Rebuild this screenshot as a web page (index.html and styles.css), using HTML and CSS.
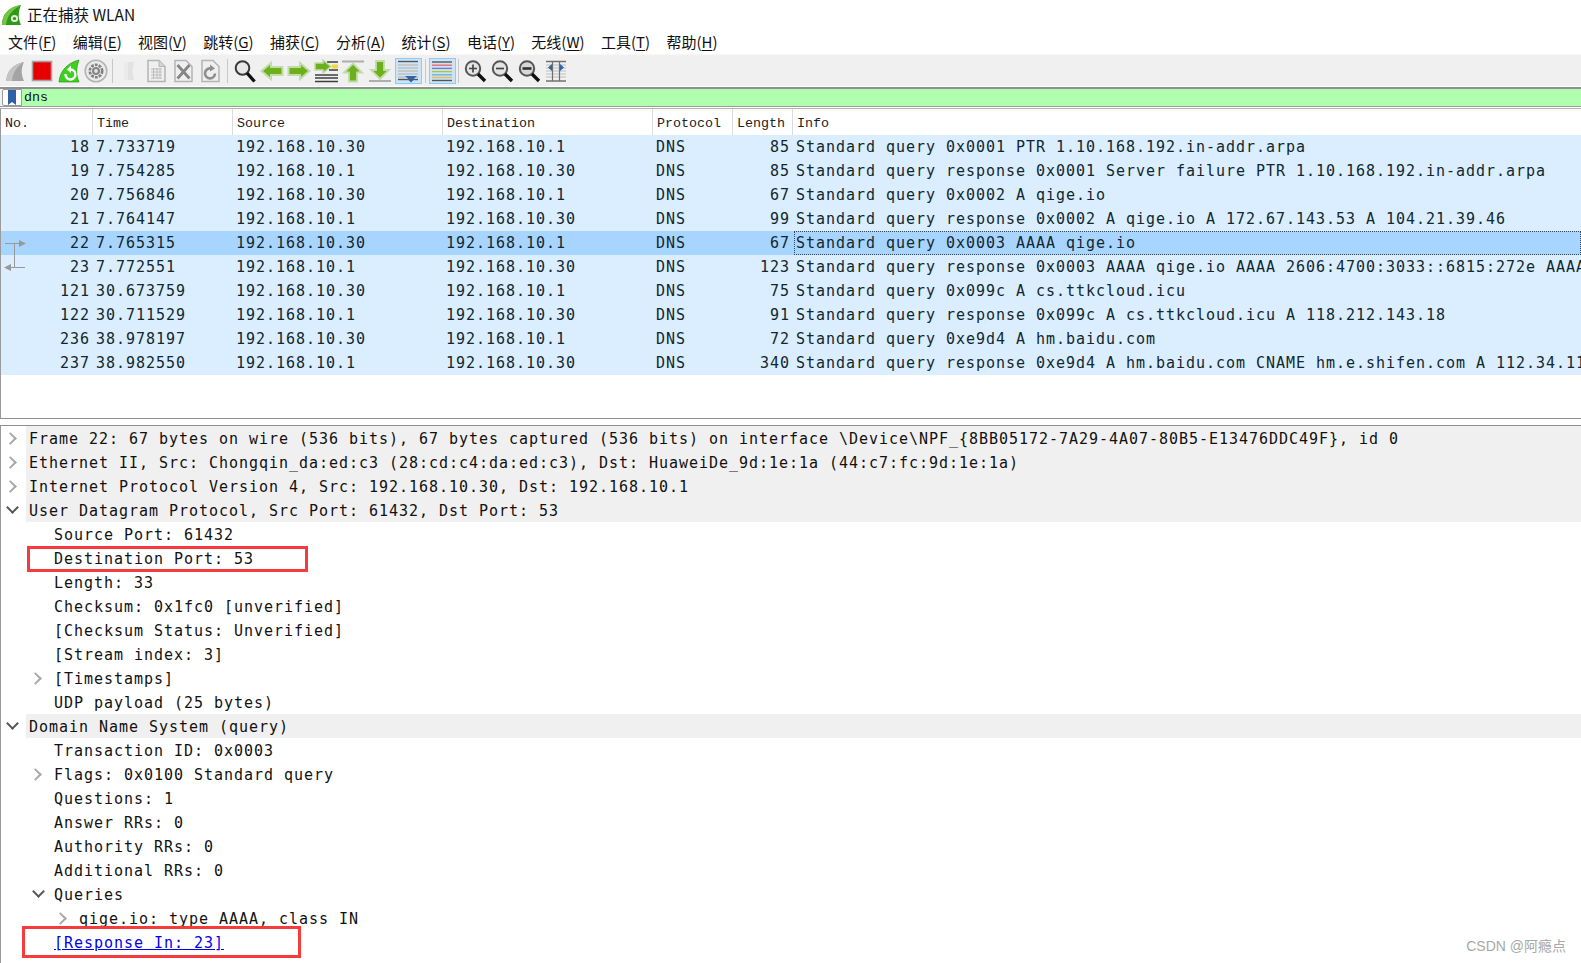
FILE: index.html
```html
<!DOCTYPE html>
<html lang="zh">
<head>
<meta charset="utf-8">
<title>正在捕获 WLAN</title>
<link rel="stylesheet" href="styles.css">
</head>
<body>
<div class="app">
  <header class="titlebar">
    <svg class="logo" viewBox="0 0 20 20"><path d="M0 20 C0 10 6 2 19 0 C16 7 16 13 19 20 Z" fill="#2f9a18"/><path d="M0 20 C0 10 6 2 19 0 C10 5 5 11 4 20 Z" fill="#72c644"/><circle cx="12.5" cy="13.5" r="3.6" fill="#dff0d4"/><circle cx="12.5" cy="13.5" r="1.6" fill="#338c1c"/></svg>
    <span class="title-text">正在捕获 WLAN</span>
  </header>
  <nav class="menubar">
    <span class="menu">文件(<u>F</u>)</span>
    <span class="menu">编辑(<u>E</u>)</span>
    <span class="menu">视图(<u>V</u>)</span>
    <span class="menu">跳转(<u>G</u>)</span>
    <span class="menu">捕获(<u>C</u>)</span>
    <span class="menu">分析(<u>A</u>)</span>
    <span class="menu">统计(<u>S</u>)</span>
    <span class="menu">电话(<u>Y</u>)</span>
    <span class="menu">无线(<u>W</u>)</span>
    <span class="menu">工具(<u>T</u>)</span>
    <span class="menu">帮助(<u>H</u>)</span>
  </nav>
  <div class="toolbar">
    <span class="tool"><svg viewBox="0 0 24 24"><path d="M3 22 C4 12 10 5 21 3 C18 9 18 16 21 22 Z" fill="#a4a4a4"/><path d="M3 22 C4 12 10 5 21 3 C14 7 10 13 9 22 Z" fill="#c4c4c4"/></svg></span>
    <span class="tool"><svg viewBox="0 0 24 24"><rect x="2.5" y="2.5" width="19" height="19" fill="#e60000" stroke="#a4a4a4" stroke-width="1.6"/></svg></span>
    <span class="tool"><svg viewBox="0 0 24 24"><path d="M2 23 C3 12 10 4 22 1 C19 9 19 16 22 23 Z" fill="#3ed01e" stroke="#2a9a12" stroke-width=".7"/><path d="M8.5 15 a5 5 0 1 0 5-4.5" fill="none" stroke="#fff" stroke-width="2.4"/><path d="M14 6.5 L14 14 L10 10.5 Z" fill="#fff"/></svg></span>
    <span class="tool"><svg viewBox="0 0 24 24"><circle cx="12" cy="12" r="10.8" fill="#ececec" stroke="#b4b4b4" stroke-width="1.6"/><circle cx="12" cy="12" r="6.2" fill="none" stroke="#808080" stroke-width="2.6" stroke-dasharray="2.8 1.1"/><circle cx="12" cy="12" r="4" fill="#858585"/><circle cx="12" cy="12" r="1.9" fill="#e4e4e4"/></svg></span>
    <span class="sep"></span>
    <span class="tool"><svg viewBox="0 0 24 24"><path d="M7 3 H17 L15.5 12 L17 21 H7 Z" fill="#e2e2e2"/><path d="M7 3 H11 V21 H7 Z" fill="#ebebeb"/></svg></span>
    <span class="tool"><svg viewBox="0 0 24 24"><path d="M4 1.5 H15 L21 7.5 V22.5 H4 Z" fill="#efefef" stroke="#b4b4b4" stroke-width="1.5"/><path d="M15 1.5 V7.5 H21" fill="#d4d4d4" stroke="#b4b4b4"/><path d="M7 10 H18 M7 13 H18 M7 16 H18 M7 19 H18 M9.5 9 V20 M13 9 V20 M16 9 V20" stroke="#bcbcbc" fill="none"/></svg></span>
    <span class="tool"><svg viewBox="0 0 24 24"><path d="M4 1.5 H15 L21 7.5 V22.5 H4 Z" fill="#efefef" stroke="#b4b4b4" stroke-width="1.5"/><path d="M6.5 6 L18.5 19.5 M18.5 6 L6.5 19.5" stroke="#858585" stroke-width="2.8"/></svg></span>
    <span class="tool"><svg viewBox="0 0 24 24"><path d="M4 1.5 H15 L21 7.5 V22.5 H4 Z" fill="#efefef" stroke="#b4b4b4" stroke-width="1.5"/><path d="M17 14.5 a5 5 0 1 1 -4-5" fill="none" stroke="#8e8e8e" stroke-width="2.6"/><path d="M12 5.5 L17 9.5 L12 12.5 Z" fill="#8e8e8e"/></svg></span>
    <span class="sep wide"></span>
    <span class="tool"><svg viewBox="0 0 24 24"><circle cx="9.5" cy="9" r="6.8" fill="#e8e8e8" stroke="#3a3a3a" stroke-width="2"/><path d="M14 14 L21.5 22.5" stroke="#111" stroke-width="3.4"/></svg></span>
    <span class="tool"><svg viewBox="0 0 24 24"><path d="M1.5 12 L11 4 V8 H22.5 V16 H11 V20 Z" fill="#6db01e" stroke="#c2dca8" stroke-width="2"/></svg></span>
    <span class="tool"><svg viewBox="0 0 24 24"><path d="M22.5 12 L13 4 V8 H1.5 V16 H13 V20 Z" fill="#6db01e" stroke="#c2dca8" stroke-width="2"/></svg></span>
    <span class="tool"><svg viewBox="0 0 24 24"><path d="M13 3 H24 M18 7 H24 M15 11 H24 M1 16 H24 M1 19 H24 M1 22.5 H24" stroke="#3e3e3e" stroke-width="1.5"/><path d="M18 5.5 H24 V9.5 H18 Z" fill="#f0d83a"/><path d="M17 7.5 L9 1 V4 H1 V11 H9 V14 Z" fill="#6db01e" stroke="#c2dca8" stroke-width="1.5"/></svg></span>
    <span class="tool"><svg viewBox="0 0 24 24"><path d="M1 2.5 H23" stroke="#aeaeae" stroke-width="2"/><path d="M12 4.5 L21 13.5 H16 V22.5 H8 V13.5 H3 Z" fill="#6db01e" stroke="#c2dca8" stroke-width="1.8"/></svg></span>
    <span class="tool"><svg viewBox="0 0 24 24"><path d="M1 22 H23" stroke="#aeaeae" stroke-width="2"/><path d="M12 20 L21 11 H16 V2 H8 V11 H3 Z" fill="#6db01e" stroke="#c2dca8" stroke-width="1.8"/></svg></span>
    <span class="tool on auto"><svg viewBox="0 0 24 24"><path d="M2 2.5 H22" stroke="#555" stroke-width="1.4"/><path d="M2 6 H22 M2 9 H22 M2 12 H22 M2 15 H22 M2 18 H22" stroke="#c0c0c0" stroke-width="1.4"/><path d="M2 20.5 H22" stroke="#555" stroke-width="1.4"/><path d="M9 17 H21 L18 19.5 V20 H12 V19.5 Z M12 20.5 H18 L15 23.5 Z" fill="#2f64a8"/></svg></span>
    <span class="sep narrow"></span>
    <span class="tool on"><svg viewBox="0 0 24 24"><path d="M2 3 H22" stroke="#555" stroke-width="1.4"/><path d="M2 6.2 H22" stroke="#e86b6b" stroke-width="1.4"/><path d="M2 9.4 H22" stroke="#7a78c8" stroke-width="1.4"/><path d="M2 12.6 H22" stroke="#a7c93a" stroke-width="1.4"/><path d="M2 15.8 H22" stroke="#6fb0d8" stroke-width="1.4"/><path d="M2 18.5 H22" stroke="#e3bd5a" stroke-width="1.4"/><path d="M2 21.5 H22" stroke="#555" stroke-width="1.4"/></svg></span>
    <span class="sep"></span>
    <span class="tool"><svg viewBox="0 0 24 24"><circle cx="10" cy="9.5" r="7.2" fill="#e4e4e4" stroke="#555" stroke-width="2"/><path d="M6 9.5 H14 M10 5.5 V13.5" stroke="#444" stroke-width="1.7"/><path d="M15 15 L22 22" stroke="#111" stroke-width="3.4"/></svg></span>
    <span class="tool"><svg viewBox="0 0 24 24"><circle cx="10" cy="9.5" r="7.2" fill="#e4e4e4" stroke="#555" stroke-width="2"/><path d="M6 9.5 H14" stroke="#444" stroke-width="1.7"/><path d="M15 15 L22 22" stroke="#111" stroke-width="3.4"/></svg></span>
    <span class="tool"><svg viewBox="0 0 24 24"><circle cx="10" cy="9.5" r="7.2" fill="#d8d8d8" stroke="#555" stroke-width="2"/><path d="M5.5 9.5 H14.5" stroke="#333" stroke-width="2.6"/><path d="M15 15 L22 22" stroke="#111" stroke-width="3.4"/></svg></span>
    <span class="tool"><svg viewBox="0 0 24 24"><path d="M2 2.5 H22 M2 22 H22" stroke="#707070" stroke-width="1.4"/><path d="M2 6 H22 M2 9 H22 M2 12 H22 M2 15 H22 M2 18 H22" stroke="#cecece" stroke-width="1.3"/><path d="M8.5 2.5 V22 M15.5 2.5 V22" stroke="#707070" stroke-width="1.2"/><path d="M8 5 L4 8.5 L8 12 Z M16 5 L20 8.5 L16 12 Z" fill="#2f64a8"/></svg></span>
  </div>
  <div class="filterbar">
    <span class="bookmark"><svg viewBox="0 0 10 15"><path d="M1 0 H9 V15 L5 12 L1 15 Z" fill="#2f5fa5"/></svg></span>
    <span class="filter-input">dns</span>
  </div>
  <section class="plist">
    <div class="phead">
      <span class="h">No.</span><span class="h">Time</span><span class="h">Source</span><span class="h">Destination</span><span class="h">Protocol</span><span class="h">Length</span><span class="h">Info</span>
    </div>
    <div class="prow"><span class="no">18</span><span>7.733719</span><span>192.168.10.30</span><span>192.168.10.1</span><span>DNS</span><span class="len">85</span><span class="info">Standard query 0x0001 PTR 1.10.168.192.in-addr.arpa</span></div>
    <div class="prow"><span class="no">19</span><span>7.754285</span><span>192.168.10.1</span><span>192.168.10.30</span><span>DNS</span><span class="len">85</span><span class="info">Standard query response 0x0001 Server failure PTR 1.10.168.192.in-addr.arpa</span></div>
    <div class="prow"><span class="no">20</span><span>7.756846</span><span>192.168.10.30</span><span>192.168.10.1</span><span>DNS</span><span class="len">67</span><span class="info">Standard query 0x0002 A qige.io</span></div>
    <div class="prow"><span class="no">21</span><span>7.764147</span><span>192.168.10.1</span><span>192.168.10.30</span><span>DNS</span><span class="len">99</span><span class="info">Standard query response 0x0002 A qige.io A 172.67.143.53 A 104.21.39.46</span></div>
    <div class="prow sel">
      <svg class="related" viewBox="0 0 26 26"><path d="M3 1.5 H18 M12.5 1.5 V25.5 M8 25.5 H23" fill="none" stroke="#999" stroke-width="1"/><path d="M17 -2 L24 1.5 L17 5 Z M9 22 L2 25.5 L9 29 Z" fill="#999"/></svg>
      <span class="no">22</span><span>7.765315</span><span>192.168.10.30</span><span>192.168.10.1</span><span>DNS</span><span class="len">67</span><span class="info focus">Standard query 0x0003 AAAA qige.io</span>
    </div>
    <div class="prow"><span class="no">23</span><span>7.772551</span><span>192.168.10.1</span><span>192.168.10.30</span><span>DNS</span><span class="len">123</span><span class="info">Standard query response 0x0003 AAAA qige.io AAAA 2606:4700:3033::6815:272e AAAA 2606:4700:3033::ac43:8f35</span></div>
    <div class="prow"><span class="no">121</span><span>30.673759</span><span>192.168.10.30</span><span>192.168.10.1</span><span>DNS</span><span class="len">75</span><span class="info">Standard query 0x099c A cs.ttkcloud.icu</span></div>
    <div class="prow"><span class="no">122</span><span>30.711529</span><span>192.168.10.1</span><span>192.168.10.30</span><span>DNS</span><span class="len">91</span><span class="info">Standard query response 0x099c A cs.ttkcloud.icu A 118.212.143.18</span></div>
    <div class="prow"><span class="no">236</span><span>38.978197</span><span>192.168.10.30</span><span>192.168.10.1</span><span>DNS</span><span class="len">72</span><span class="info">Standard query 0xe9d4 A hm.baidu.com</span></div>
    <div class="prow"><span class="no">237</span><span>38.982550</span><span>192.168.10.1</span><span>192.168.10.30</span><span>DNS</span><span class="len">340</span><span class="info">Standard query response 0xe9d4 A hm.baidu.com CNAME hm.e.shifen.com A 112.34.111.235 A 112.34.112.83</span></div>
  </section>
  <section class="ptree">
    <div class="t sec"><i class="ar"></i><span class="tx">Frame 22: 67 bytes on wire (536 bits), 67 bytes captured (536 bits) on interface \Device\NPF_{8BB05172-7A29-4A07-80B5-E13476DDC49F}, id 0</span></div>
    <div class="t sec"><i class="ar"></i><span class="tx">Ethernet II, Src: Chongqin_da:ed:c3 (28:cd:c4:da:ed:c3), Dst: HuaweiDe_9d:1e:1a (44:c7:fc:9d:1e:1a)</span></div>
    <div class="t sec"><i class="ar"></i><span class="tx">Internet Protocol Version 4, Src: 192.168.10.30, Dst: 192.168.10.1</span></div>
    <div class="t sec"><i class="ar open"></i><span class="tx">User Datagram Protocol, Src Port: 61432, Dst Port: 53</span></div>
    <div class="t l1"><span class="tx">Source Port: 61432</span></div>
    <div class="t l1"><span class="tx">Destination Port: 53</span><span class="mark mark-a"></span></div>
    <div class="t l1"><span class="tx">Length: 33</span></div>
    <div class="t l1"><span class="tx">Checksum: 0x1fc0 [unverified]</span></div>
    <div class="t l1"><span class="tx">[Checksum Status: Unverified]</span></div>
    <div class="t l1"><span class="tx">[Stream index: 3]</span></div>
    <div class="t l1"><i class="ar"></i><span class="tx">[Timestamps]</span></div>
    <div class="t l1"><span class="tx">UDP payload (25 bytes)</span></div>
    <div class="t sec"><i class="ar open"></i><span class="tx">Domain Name System (query)</span></div>
    <div class="t l1"><span class="tx">Transaction ID: 0x0003</span></div>
    <div class="t l1"><i class="ar"></i><span class="tx">Flags: 0x0100 Standard query</span></div>
    <div class="t l1"><span class="tx">Questions: 1</span></div>
    <div class="t l1"><span class="tx">Answer RRs: 0</span></div>
    <div class="t l1"><span class="tx">Authority RRs: 0</span></div>
    <div class="t l1"><span class="tx">Additional RRs: 0</span></div>
    <div class="t l1"><i class="ar open"></i><span class="tx">Queries</span></div>
    <div class="t l2"><i class="ar"></i><span class="tx">qige.io: type AAAA, class IN</span></div>
    <div class="t l1"><span class="tx link">[Response In: 23]</span><span class="mark mark-b"></span></div>
    <div class="watermark">CSDN @阿瘾点</div>
  </section>
</div>
</body>
</html>
```
FILE: styles.css
```css
* { box-sizing: border-box; }
html, body { margin: 0; padding: 0; background: #fff; }
body { width: 1581px; height: 963px; overflow: hidden; }
.app { display: flex; flex-direction: column; height: 963px; overflow: hidden; color: #000; }

.titlebar { height: 27px; display: flex; align-items: center; gap: 5px; padding-left: 2px; flex: none; }
.logo { width: 20px; height: 20px; flex: none; margin-top: 2px; }
.title-text { font: 15.5px/20px "Noto Sans CJK SC", "Liberation Sans", sans-serif; color: #111; }

.menubar { height: 27px; padding-top: 2px; display: flex; align-items: center; gap: 16.3px; padding-left: 8px; flex: none; font: 15px/20px "Noto Sans CJK SC", "Liberation Sans", sans-serif; color: #111; }
.menu u { text-underline-offset: 2px; }

.toolbar { height: 32px; background: #f0f0f0; border-top: 1px solid #f8f8f8; display: flex; align-items: center; padding-left: 1px; flex: none; }
.tool { width: 27px; height: 26px; display: flex; align-items: center; justify-content: center; flex: none; }
.tool svg { width: 24px; height: 24px; display: block; }
.tool.on { background: #cde4f7; box-shadow: inset 0 0 0 1px #90c8f6; }
.tool.auto { margin-left: 1.5px; }
.sep { width: 1px; height: 24px; background: #c8c8c8; margin: 0 2.5px; flex: none; }
.sep.wide { margin: 0 3.5px; }
.sep.narrow { margin: 0 3px; }

.filterbar { height: 20px; margin-top: 1px; display: flex; flex: none; background: #f0f0f0; border-top: 2px solid #8f8f8f; border-bottom: 1px solid #9a9a9a; }
.bookmark { width: 20px; margin-left: 2px; background: #fff; border: 1px solid #9a9a9a; display: flex; align-items: center; justify-content: center; flex: none; border-radius: 2px 0 0 2px; }
.bookmark svg { width: 10px; height: 15px; display: block; }
.filter-input { flex: 1; background: #afffaf; padding-left: 2px; font: 13.33px/17px "Liberation Mono", monospace; color: #111; }

.plist { height: 311px; margin-top: 1px; border-left: 1px solid #9a9a9a; border-top: 1px solid #b0b0b0; border-bottom: 1px solid #8f8f8f; flex: none; overflow: hidden; }
.phead, .prow { display: grid; grid-template-columns: 91px 140px 210px 210px 80px 60px 789px; white-space: nowrap; }
.phead { height: 26px; background: #fff; font: 13.33px/30px "Liberation Mono", monospace; color: #222; }
.h { height: 26px; padding-left: 4px; border-left: 1px solid #dcdcdc; }
.h:first-child { padding-left: 4px; border-left: 0; }
.prow { position: relative; height: 24px; background: #daeeff; color: #12272e; font: 15px/24px "DejaVu Sans Mono", monospace; letter-spacing: 0.97px; }
.prow > span { padding-left: 4px; overflow: hidden; }
.prow > .no, .prow > .len { padding-left: 0; padding-right: 2px; text-align: right; }
.prow.sel { background: #a8d5ff; z-index: 1; }
.prow > .focus { margin-left: 2px; padding-left: 2px; outline: 1px dotted #2c4a5c; outline-offset: -1px; }
.related { position: absolute; left: 1px; top: 11px; width: 26px; height: 26px; overflow: visible; }

.ptree { position: relative; flex: 1; margin-top: 6px; border-left: 1px solid #9a9a9a; border-top: 1px solid #8f8f8f; overflow: hidden; font: 15px/26px "DejaVu Sans Mono", monospace; letter-spacing: 0.97px; color: #111; }
.t { position: relative; height: 24px; white-space: nowrap; padding-left: 28px; }
.t.l1 { padding-left: 53px; }
.t.l2 { padding-left: 78px; }
.t.sec { margin-left: 25px; padding-left: 3px; background: #f0f0f0; }
.ar { position: absolute; top: 7.5px; width: 9px; height: 9px; border-right: 2px solid #a8a8a8; border-top: 2px solid #a8a8a8; transform: rotate(45deg); }
.ar.open { top: 5px; border-color: #555; transform: rotate(135deg); }
.t.sec .ar { left: -20px; }
.t.sec .ar.open { left: -18px; }
.t.l1 .ar { left: 30px; }
.t.l1 .ar.open { left: 32.5px; }
.t.l2 .ar { left: 55px; }
.link { color: #0000ee; text-decoration: underline; }
.mark { position: absolute; border: 3px solid #f53b3b; pointer-events: none; }
.mark-a { left: 26px; top: 0; width: 281px; height: 26px; }
.mark-b { left: 21px; top: -4px; width: 279px; height: 32px; }
.watermark { position: absolute; right: 15px; bottom: 8px; font: 14px/18px "Liberation Sans", "Noto Sans CJK SC", sans-serif; letter-spacing: 0; color: #a8a8a8; }
```
